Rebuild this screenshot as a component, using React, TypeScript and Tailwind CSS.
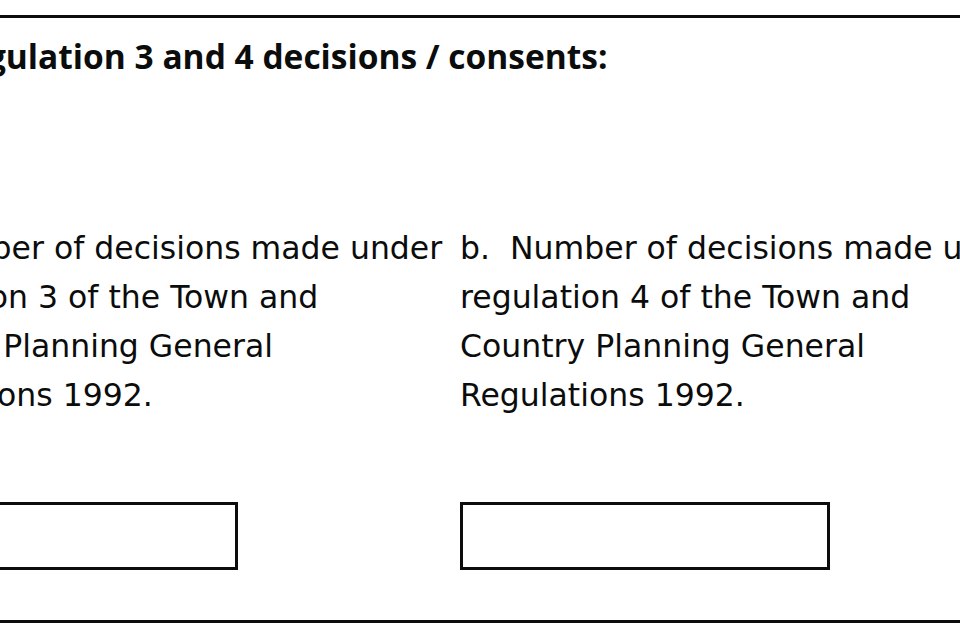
export default function App() {
  return (
    <div className="w-[960px] h-[640px] overflow-hidden bg-white text-[#0b0c0c]" style={{ fontFamily: '"DejaVu Sans", sans-serif' }}>
      <div className="mt-[15px] ml-[-200px] w-[1400px] h-[608px] border-y-[3px] border-[#0b0c0c] pl-[68px]">
        <h2 className="mt-[18px] ml-[77px] text-[33.5px] leading-[40px] font-bold whitespace-nowrap" style={{ fontFamily: '"Open Sans", sans-serif' }}>
          Regulation 3 and 4 decisions / consents:
        </h2>
        <div className="mt-[148px] flex gap-[10px]">
          {[
            { l: "a.", n: "3" },
            { l: "b.", n: "4" },
          ].map((c) => (
            <div key={c.l} className="w-[582px] flex flex-col">
              <p className="text-[31.5px] leading-[49px] whitespace-nowrap">
                {c.l}&nbsp; Number of decisions made under
                <br />
                regulation {c.n} of the Town and
                <br />
                Country Planning General
                <br />
                Regulations 1992.
              </p>
              <input type="text" className="mt-[82px] w-[370px] h-[68px] border-[3px] border-[#0b0c0c] outline-none" />
            </div>
          ))}
        </div>
      </div>
    </div>
  );
}
